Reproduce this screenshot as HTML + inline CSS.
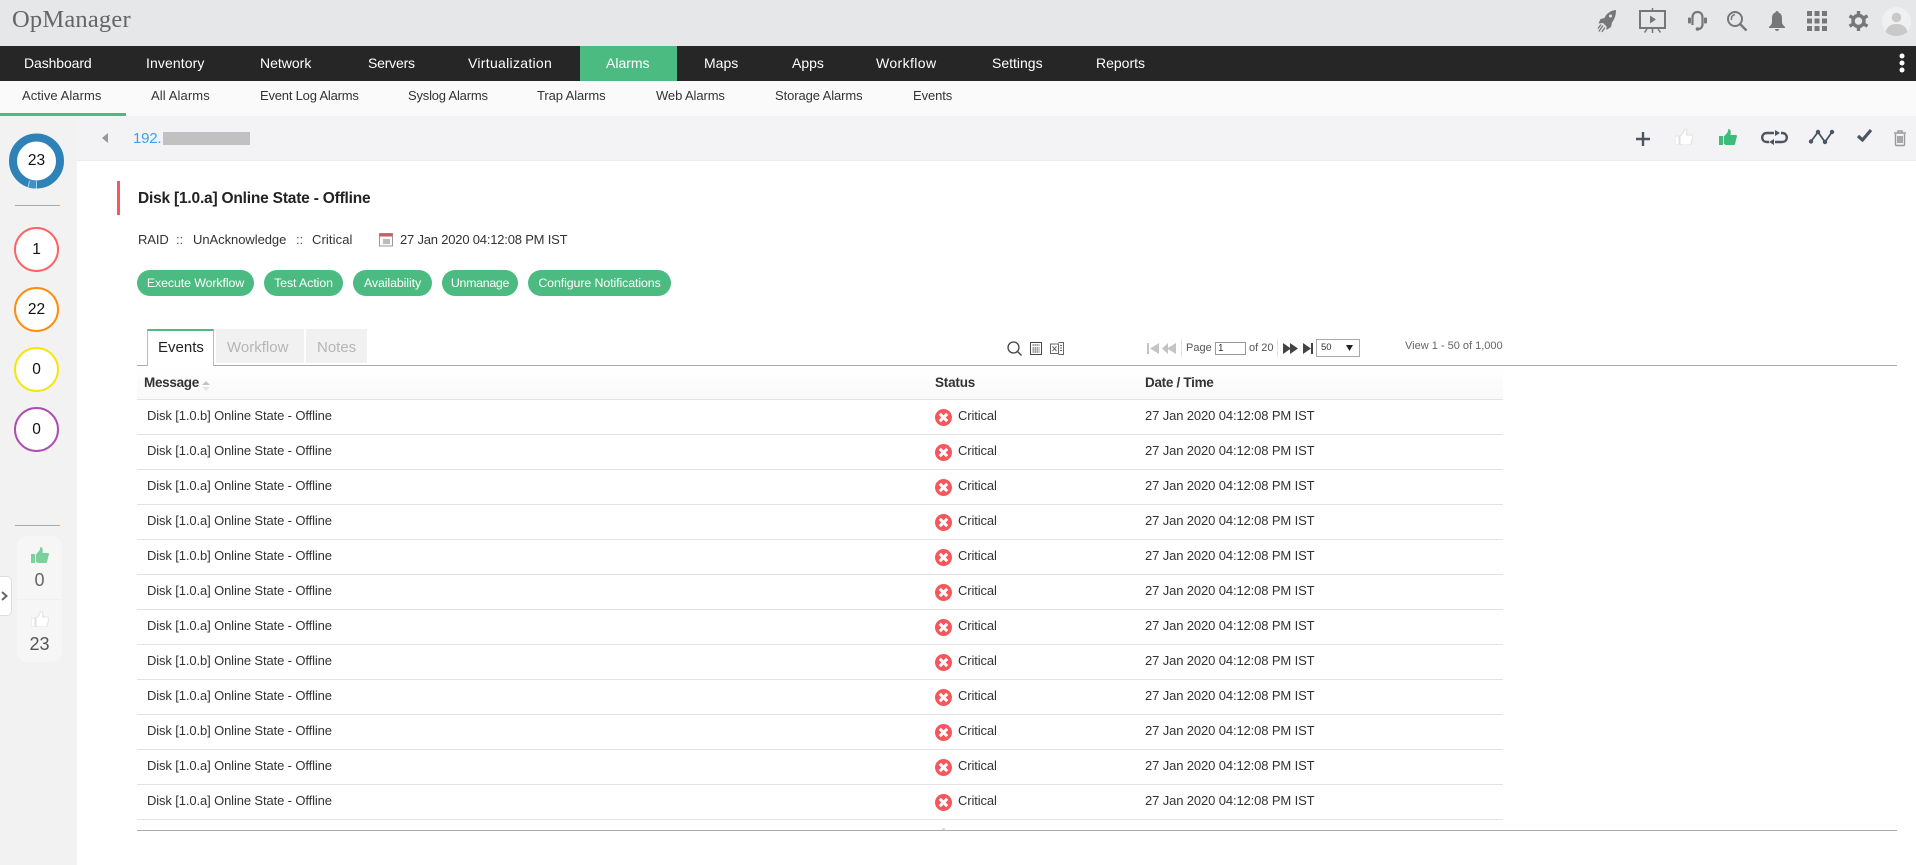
<!DOCTYPE html>
<html lang="en"><head><meta charset="utf-8"><title>OpManager</title>
<style>
*{box-sizing:border-box}
html,body{margin:0;padding:0;background:#fff}
body{width:1916px;height:865px;position:relative;overflow:hidden;font-family:"Liberation Sans",sans-serif;color:#333}
.a{position:absolute;white-space:nowrap}
.t{position:absolute;white-space:nowrap;line-height:18px;height:18px}
svg{position:absolute;overflow:visible}
.nav{color:#fff;font-size:14px;top:54px}
.sub{color:#333;font-size:13px;top:87px;letter-spacing:-.1px}
.btn{position:absolute;top:270px;height:26px;border-radius:13px;background:#4bbb81;color:#fff;font-size:12.4px;line-height:27px;text-align:center;white-space:nowrap;letter-spacing:-.1px}
.c{position:absolute;left:14px;width:45px;height:45px;border-radius:50%;background:#fff;border:2.5px solid;text-align:center;font-size:15.5px;line-height:42px;color:#111}
.row{position:absolute;left:137px;width:1366px;height:35px;border-bottom:1px solid #e3e3e3;font-size:13px;color:#333}
.row span{position:absolute;top:7px;line-height:18px;white-space:nowrap;letter-spacing:-.12px}
.row svg{left:798px;top:9px}
.th{font-size:13.5px;font-weight:bold;color:#333;top:374px;letter-spacing:-.3px}
.tab{font-size:15px;top:339px}
</style></head><body>
<svg width="0" height="0" style="position:absolute"><defs>
<symbol id="th" viewBox="0 0 18 16"><rect x="0" y="7" width="4" height="9"/><path d="M5 7.5 8.5 3.5 9.5 0C11.5 0 12.2 2 11.5 6H17C18 6 18.2 7.5 17.6 8.5L16 15C15.8 16 15 16 14.5 16H7L5 15Z"/></symbol>
<symbol id="x" viewBox="0 0 17 17"><circle cx="8.5" cy="8.5" r="8.5" fill="#f6575c"/><path d="M4.8 4.8 12.200 12.200M12.200 4.800 4.800 12.200" stroke="#fff" stroke-width="3"/></symbol>
</defs></svg>

<!-- top bar -->
<div class="a" style="left:0;top:0;width:1916px;height:46px;background:#e6e7e9"></div>
<div class="t" style="left:12px;top:6px;height:28px;line-height:28px;font-family:'Liberation Serif',serif;font-size:24.5px;color:#666;letter-spacing:.2px">OpManager</div>

<svg style="left:1598px;top:10px" width="18" height="22" viewBox="0 0 18 22" fill="#777"><path d="M18 0C13 .5 8.500 3 6.500 8L2.500 9 .5 13.500 5 13 8.500 16.500 8.500 20 13 17 14 12.500C17 8.500 18 4.500 18 0Z"/><circle cx="12.500" cy="6" r="1.500" fill="#e6e7e9"/><path d="M.8 21.500 5 15.500M3.800 22 7 17.500M0 18.500 3 14.500" stroke="#777" stroke-width="1.300" fill="none"/></svg>
<svg style="left:1639px;top:8px" width="27" height="25" viewBox="0 0 27 25" fill="none" stroke="#777" stroke-width="2"><rect x="1" y="3" width="25" height="17"/><path d="M13.500 0V3M13.500 20V25M8 21 5.500 24.500M19 21 21.500 24.500" stroke-width="1.500"/><path d="M11 7.500 17 11.500 11 15.500Z" fill="#777" stroke="none"/></svg>
<svg style="left:1688px;top:11px" width="19" height="20" viewBox="0 0 19 20" fill="none" stroke="#777" stroke-width="2.200"><path d="M4.500 14V6.500C4.500 3 6.500 1 9.500 1S14.500 3 14.500 6.500V13C14.500 16 13 18 10 18"/><rect x="0" y="6.500" width="3" height="6" rx="1" fill="#777" stroke="none"/><rect x="16" y="6.500" width="3" height="6" rx="1" fill="#777" stroke="none"/><circle cx="9.500" cy="18" r="1.800" fill="#777" stroke="none"/></svg>
<svg style="left:1727px;top:11px" width="20" height="20" viewBox="0 0 20 20" fill="none" stroke="#777" stroke-width="2"><circle cx="8" cy="8" r="7"/><path d="M13 13 19.500 19.500" stroke-width="2.400"/><path d="M8 3.500C5.500 4 4 6 4.500 9" stroke-width="1.500"/></svg>
<svg style="left:1769px;top:11px" width="16" height="20" viewBox="0 0 16 20" fill="#777"><path d="M8 0C9 0 9.500 .7 9.500 1.500 12 2.300 13 4.500 13 7V11C13 13 14.500 14.500 16 16V17H0V16C1.500 14.500 3 13 3 11V7C3 4.500 4 2.300 6.500 1.500 6.500 .7 7 0 8 0Z"/><path d="M6 18H10C10 19.300 9 20 8 20S6 19.300 6 18Z"/></svg>
<svg style="left:1807px;top:11px" width="20" height="20" viewBox="0 0 20 20" fill="#777"><rect x="0" y="0" width="5" height="5"/><rect x="7.500" y="0" width="5" height="5"/><rect x="15" y="0" width="5" height="5"/><rect x="0" y="7.500" width="5" height="5"/><rect x="7.500" y="7.500" width="5" height="5"/><rect x="15" y="7.500" width="5" height="5"/><rect x="0" y="15" width="5" height="5"/><rect x="7.500" y="15" width="5" height="5"/><rect x="15" y="15" width="5" height="5"/></svg>
<svg style="left:1848px;top:11px" width="21" height="20" viewBox="0 0 21 20" fill="none" stroke="#777"><circle cx="10.500" cy="10" r="5.500" stroke-width="3.400"/><path d="M10.500 0V3.500M10.500 16.500V20M1.500 4.800 4.700 6.700M16.300 13.300 19.500 15.200M1.500 15.200 4.700 13.300M16.300 6.700 19.500 4.800" stroke-width="3.400"/></svg>
<svg style="left:1882px;top:7px" width="29" height="29" viewBox="0 0 29 29"><circle cx="14.500" cy="14.500" r="14.500" fill="#f0f0f0"/><circle cx="14.500" cy="10.500" r="4.800" fill="#c9c9c9"/><path d="M3.500 25C5 19 9 17 14.500 17S24 19 25.500 25C22.500 27.700 18.500 29 14.500 29S6.500 27.700 3.500 25Z" fill="#c9c9c9"/></svg>

<!-- nav -->
<div class="a" style="left:0;top:46px;width:1916px;height:35px;background:#262626"></div>
<div class="a" style="left:580px;top:46px;width:97px;height:35px;background:#4bbb81"></div>
<div class="t nav" style="left:24px;letter-spacing:-.1px">Dashboard</div>
<div class="t nav" style="left:146px;letter-spacing:.1px">Inventory</div>
<div class="t nav" style="left:260px">Network</div>
<div class="t nav" style="left:368px;letter-spacing:-.2px">Servers</div>
<div class="t nav" style="left:468px;letter-spacing:.3px">Virtualization</div>
<div class="t nav" style="left:606px">Alarms</div>
<div class="t nav" style="left:704px">Maps</div>
<div class="t nav" style="left:792px">Apps</div>
<div class="t nav" style="left:876px;letter-spacing:.4px">Workflow</div>
<div class="t nav" style="left:992px">Settings</div>
<div class="t nav" style="left:1096px">Reports</div>
<svg style="left:1899px;top:53px" width="6" height="20"><circle cx="3" cy="3" r="2.500" fill="#fff"/><circle cx="3" cy="10" r="2.500" fill="#fff"/><circle cx="3" cy="17" r="2.500" fill="#fff"/></svg>

<!-- subnav -->
<div class="a" style="left:0;top:81px;width:1916px;height:35px;background:#fafafa;box-shadow:0 1px 2px rgba(0,0,0,.06)"></div>
<div class="a" style="left:0;top:113px;width:126px;height:3px;background:#4bbb81"></div>
<div class="t sub" style="left:22px;letter-spacing:.05px">Active Alarms</div>
<div class="t sub" style="left:151px;letter-spacing:.1px">All Alarms</div>
<div class="t sub" style="left:260px;letter-spacing:-.2px">Event Log Alarms</div>
<div class="t sub" style="left:408px;letter-spacing:-.2px">Syslog Alarms</div>
<div class="t sub" style="left:537px">Trap Alarms</div>
<div class="t sub" style="left:656px">Web Alarms</div>
<div class="t sub" style="left:775px">Storage Alarms</div>
<div class="t sub" style="left:913px">Events</div>

<!-- sidebar -->
<div class="a" style="left:0;top:116px;width:77px;height:749px;background:#f2f2f2"></div>
<svg style="left:9px;top:133px" width="55" height="56" viewBox="0 0 55 56">
<circle cx="27.500" cy="28" r="23.500" fill="#fff" stroke="#2f82b7" stroke-width="8"/>
<path d="M20 50.500 A23.500 23.500 0 0 0 27.500 51.500" fill="none" stroke="#3f92c8" stroke-width="8"/>
<path d="M27.500 48V55.500M20.500 47.500 19 54.800" stroke="#a9cfe6" stroke-width="1"/>
</svg>
<div class="a" style="left:14px;top:151px;width:45px;text-align:center;font-size:15.5px;line-height:20px;color:#111">23</div>
<div class="a" style="left:15px;top:205px;width:45px;height:1px;background:#79b6e2"></div>
<div class="c" style="top:227px;border-color:#fb6364">1</div>
<div class="c" style="top:287px;border-color:#fd8e0b">22</div>
<div class="c" style="top:347px;border-color:#f7e40a">0</div>
<div class="c" style="top:407px;border-color:#ad4db1">0</div>
<div class="a" style="left:15px;top:525px;width:45px;height:1px;background:#79b6e2"></div>
<div class="a" style="left:17px;top:536px;width:45px;height:126px;border-radius:10px;background:#f6f6f6"></div>
<div class="a" style="left:17px;top:599px;width:45px;height:1px;background:#f0f0f0"></div>
<svg style="left:31px;top:547px" width="18" height="16" fill="#7bd09d"><use href="#th"/></svg>
<div class="a" style="left:17px;top:569px;width:45px;text-align:center;font-size:18px;line-height:22px;color:#666">0</div>
<svg style="left:31px;top:611px" width="18" height="16" fill="#fff" stroke="#e2e2e2" stroke-width="1"><use href="#th"/></svg>
<div class="a" style="left:17px;top:633px;width:45px;text-align:center;font-size:18px;line-height:22px;color:#555">23</div>
<div class="a" style="left:-6px;top:576px;width:18px;height:40px;background:#fff;border:1px solid #ddd;border-radius:5px"></div>
<svg style="left:1px;top:591px" width="7" height="10" fill="none" stroke="#666" stroke-width="2"><path d="M1 1 5.500 5 1 9"/></svg>

<!-- header -->
<div class="a" style="left:77px;top:116px;width:1839px;height:45px;background:#f3f3f5;border-bottom:1px solid #ececec"></div>
<svg style="left:102px;top:133px" width="6" height="10"><path d="M6 0V10L0 5Z" fill="#999"/></svg>
<div class="t" style="left:133px;top:130px;font-size:15px;color:#3c9ff0;letter-spacing:-.2px">192.</div>
<div class="a" style="left:163px;top:132px;width:87px;height:13px;background:#c1c1c1"></div>

<svg style="left:1636px;top:132px" width="14" height="14"><path d="M7 0V14M0 7H14" stroke="#4b5563" stroke-width="2.400"/></svg>
<svg style="left:1675px;top:129px" width="18" height="16" fill="#fff" stroke="#e0e0e0" stroke-width="1"><use href="#th"/></svg>
<svg style="left:1719px;top:129px" width="18" height="16" fill="#3dbb7b"><use href="#th"/></svg>
<svg style="left:1761px;top:130px" width="27" height="15" viewBox="0 0 27 15" fill="none" stroke="#4b5563" stroke-width="2.400"><path d="M13 3H6C3 3 1.200 5 1.200 7.500S3 12 6 12H8M14 12H21C24 12 25.800 10 25.800 7.500S24 3 21 3H20"/><path d="M14 0 19 3 14 6ZM13 9 8 12 13 15Z" fill="#4b5563" stroke="none"/></svg>
<svg style="left:1809px;top:130px" width="25" height="14" viewBox="0 0 25 14" fill="#4b5563" stroke="#4b5563"><path d="M2 11.500 9 2 16 12 23 2" fill="none" stroke-width="1.800"/><circle cx="2" cy="11.500" r="2.200" stroke="none"/><circle cx="9" cy="2" r="2.200" stroke="none"/><circle cx="16" cy="12" r="2.200" stroke="none"/><circle cx="23" cy="2" r="2.200" stroke="none"/></svg>
<svg style="left:1857px;top:129px" width="15" height="13" fill="none" stroke="#4b5563" stroke-width="3.200"><path d="M1 7 5.500 11 14 1"/></svg>
<svg style="left:1893px;top:130px" width="14" height="16" viewBox="0 0 13 16" fill="none" stroke="#9a9a9a" stroke-width="1.400"><path d="M2 4V14.500C2 15.200 2.500 15.500 3 15.500H10C10.500 15.500 11 15.200 11 14.500V4M.5 3H12.500M4.500 3V1H8.500V3"/><path d="M4.500 6V13M6.500 6V13M8.500 6V13" stroke="#888"/></svg>

<!-- alarm info -->
<div class="a" style="left:117px;top:181px;width:3px;height:34px;background:#f6575c"></div>
<div class="t" style="left:138px;top:190px;font-size:15.5px;font-weight:bold;color:#222;letter-spacing:-.2px">Disk [1.0.a] Online State - Offline</div>
<div class="t" style="left:138px;top:231px;font-size:13px;color:#333;letter-spacing:-.1px">RAID</div>
<div class="t" style="left:176px;top:231px;font-size:13px;color:#555">::</div>
<div class="t" style="left:193px;top:231px;font-size:13px;color:#333;letter-spacing:-.05px">UnAcknowledge</div>
<div class="t" style="left:296px;top:231px;font-size:13px;color:#555">::</div>
<div class="t" style="left:312px;top:231px;font-size:13px;color:#333;letter-spacing:.1px">Critical</div>
<svg style="left:379px;top:232px" width="15" height="15" viewBox="0 0 15 15"><rect x=".5" y="1.500" width="13" height="12.500" fill="#fafafa" stroke="#999"/><rect x=".5" y="1.500" width="13" height="3" fill="#c9605f"/><path d="M4 7H11V12H4Z" fill="#bbb"/></svg>
<div class="t" style="left:400px;top:231px;font-size:13px;color:#333;letter-spacing:-.2px">27 Jan 2020 04:12:08 PM IST</div>

<div class="btn" style="left:137px;width:117px">Execute Workflow</div>
<div class="btn" style="left:264px;width:79px">Test Action</div>
<div class="btn" style="left:353px;width:79px">Availability</div>
<div class="btn" style="left:442px;width:76px;letter-spacing:-.3px">Unmanage</div>
<div class="btn" style="left:528px;width:143px">Configure Notifications</div>

<!-- tabs -->
<div class="a" style="left:147px;top:329px;width:67px;height:37px;background:#fff;border:1px solid #bbb;border-top:2px solid #4bbb81;border-bottom:none;z-index:2"></div>
<div class="t tab" style="left:158px;color:#222;z-index:3">Events</div>
<div class="a" style="left:216px;top:329px;width:88px;height:34px;background:#f1f1f1"></div>
<div class="t tab" style="left:227px;color:#b5b5b5">Workflow</div>
<div class="a" style="left:306px;top:329px;width:61px;height:34px;background:#f1f1f1"></div>
<div class="t tab" style="left:317px;color:#b5b5b5">Notes</div>
<div class="a" style="left:137px;top:365px;width:1760px;height:1px;background:#aaa"></div>

<!-- tools -->
<svg style="left:1007px;top:341px" width="15" height="15" fill="none" stroke="#444" stroke-width="1.300"><circle cx="6.500" cy="6.500" r="5.500"/><path d="M10.500 10.500 14.500 14.500"/></svg>
<svg style="left:1030px;top:342px" width="12" height="13" fill="none" stroke="#444"><rect x=".5" y=".5" width="11" height="12"/><path d="M2.500 3H9.500M2.500 6H9.500M2.500 8H9.500M2.500 10H9.500" stroke-dasharray="1.500 .5"/></svg>
<svg style="left:1050px;top:342px" width="14" height="13" fill="none" stroke="#666"><rect x=".5" y="2" width="8" height="9.500"/><path d="M8.500 .5H13.500V12.500H8.500M10 3.500H12M10 6H12M10 8.500H12M2.500 4.500 6.500 9M6.500 4.500 2.500 9"/></svg>
<svg style="left:1147px;top:342px" width="30" height="13" fill="#c4c4c4"><rect x="0" y="1" width="2" height="11"/><path d="M12 1V12L3 6.500ZM21 1V12L15 6.500ZM29 1V12L20 6.500Z"/></svg>
<div class="a" style="left:1181px;top:339px;width:1px;height:18px;background:#e5e5e5"></div>
<div class="t" style="left:1186px;top:339px;font-size:11px;color:#555">Page</div>
<div class="a" style="left:1215px;top:342px;width:31px;height:13px;border:1px solid #999;background:#fff;font-size:10px;line-height:11px;padding-left:2px;color:#333">1</div>
<div class="t" style="left:1249px;top:339px;font-size:11px;color:#555">of 20</div>
<div class="a" style="left:1277px;top:339px;width:1px;height:18px;background:#e5e5e5"></div>
<svg style="left:1283px;top:342px" width="31" height="13" fill="#444"><path d="M0 1V12L8 6.500ZM7 1V12L15 6.500ZM20 1V12L28 6.500Z"/><rect x="28" y="1" width="2" height="11"/></svg>
<div class="a" style="left:1316px;top:339px;width:44px;height:18px;border:1px solid #aaa;background:#fff;font-size:9.5px;line-height:16px;padding-left:4px;color:#333">50</div>
<svg style="left:1346px;top:345px" width="7" height="6"><path d="M0 0H7L3.500 6Z" fill="#222"/></svg>
<div class="t" style="left:1405px;top:337px;font-size:11px;color:#666">View 1 - 50 of 1,000</div>

<!-- table -->
<div class="a" style="left:137px;top:366px;width:1366px;height:34px;background:linear-gradient(#fff,#f9f9f9);border-bottom:1px solid #e3e3e3"></div>
<div class="t th" style="left:144px">Message</div>
<svg style="left:202px;top:381px" width="8" height="10"><path d="M4 0 8 4H0Z" fill="#c4c4c4"/><path d="M0 6H8L4 10Z" fill="#e4e4e4"/></svg>
<div class="t th" style="left:935px;letter-spacing:-.2px">Status</div>
<div class="t th" style="left:1145px">Date / Time</div>

<div class="row" style="top:400px"><span style="left:10px">Disk [1.0.b] Online State - Offline</span><svg width="17" height="17"><use href="#x"/></svg><span style="left:821px">Critical</span><span style="left:1008px">27 Jan 2020 04:12:08 PM IST</span></div>
<div class="row" style="top:435px"><span style="left:10px">Disk [1.0.a] Online State - Offline</span><svg width="17" height="17"><use href="#x"/></svg><span style="left:821px">Critical</span><span style="left:1008px">27 Jan 2020 04:12:08 PM IST</span></div>
<div class="row" style="top:470px"><span style="left:10px">Disk [1.0.a] Online State - Offline</span><svg width="17" height="17"><use href="#x"/></svg><span style="left:821px">Critical</span><span style="left:1008px">27 Jan 2020 04:12:08 PM IST</span></div>
<div class="row" style="top:505px"><span style="left:10px">Disk [1.0.a] Online State - Offline</span><svg width="17" height="17"><use href="#x"/></svg><span style="left:821px">Critical</span><span style="left:1008px">27 Jan 2020 04:12:08 PM IST</span></div>
<div class="row" style="top:540px"><span style="left:10px">Disk [1.0.b] Online State - Offline</span><svg width="17" height="17"><use href="#x"/></svg><span style="left:821px">Critical</span><span style="left:1008px">27 Jan 2020 04:12:08 PM IST</span></div>
<div class="row" style="top:575px"><span style="left:10px">Disk [1.0.a] Online State - Offline</span><svg width="17" height="17"><use href="#x"/></svg><span style="left:821px">Critical</span><span style="left:1008px">27 Jan 2020 04:12:08 PM IST</span></div>
<div class="row" style="top:610px"><span style="left:10px">Disk [1.0.a] Online State - Offline</span><svg width="17" height="17"><use href="#x"/></svg><span style="left:821px">Critical</span><span style="left:1008px">27 Jan 2020 04:12:08 PM IST</span></div>
<div class="row" style="top:645px"><span style="left:10px">Disk [1.0.b] Online State - Offline</span><svg width="17" height="17"><use href="#x"/></svg><span style="left:821px">Critical</span><span style="left:1008px">27 Jan 2020 04:12:08 PM IST</span></div>
<div class="row" style="top:680px"><span style="left:10px">Disk [1.0.a] Online State - Offline</span><svg width="17" height="17"><use href="#x"/></svg><span style="left:821px">Critical</span><span style="left:1008px">27 Jan 2020 04:12:08 PM IST</span></div>
<div class="row" style="top:715px"><span style="left:10px">Disk [1.0.b] Online State - Offline</span><svg width="17" height="17"><use href="#x"/></svg><span style="left:821px">Critical</span><span style="left:1008px">27 Jan 2020 04:12:08 PM IST</span></div>
<div class="row" style="top:750px"><span style="left:10px">Disk [1.0.a] Online State - Offline</span><svg width="17" height="17"><use href="#x"/></svg><span style="left:821px">Critical</span><span style="left:1008px">27 Jan 2020 04:12:08 PM IST</span></div>
<div class="row" style="top:785px"><span style="left:10px">Disk [1.0.a] Online State - Offline</span><svg width="17" height="17"><use href="#x"/></svg><span style="left:821px">Critical</span><span style="left:1008px">27 Jan 2020 04:12:08 PM IST</span></div>
<div class="a" style="left:942px;top:828px;width:3px;height:2px;background:#ddd"></div>
<div class="a" style="left:137px;top:830px;width:1760px;height:1px;background:#aaa"></div>
</body></html>
